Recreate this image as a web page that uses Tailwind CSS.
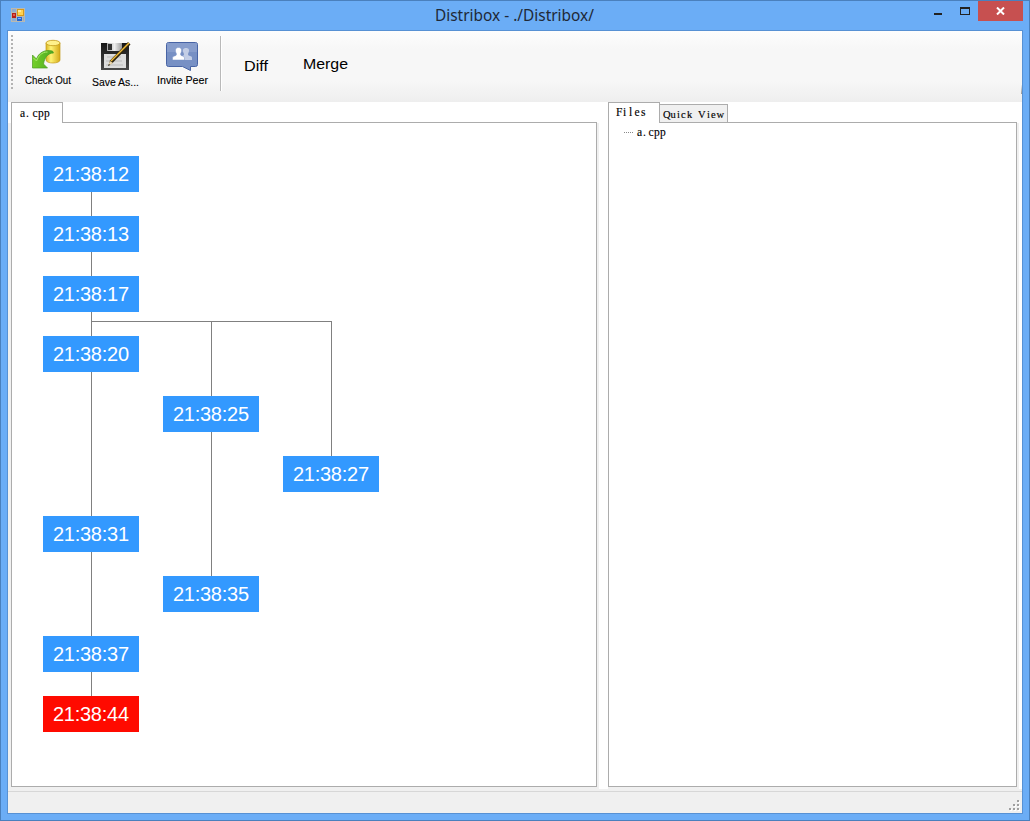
<!DOCTYPE html>
<html lang="en">
<head>
<meta charset="utf-8">
<title>Distribox</title>
<script src="https://cdn.jsdelivr.net/npm/@tailwindcss/browser@4"></script>
</head>
<body class="h-[821px] w-[1030px] overflow-hidden font-['Liberation_Sans',sans-serif] text-black">
<div class="flex h-[821px] w-[1030px] flex-col border border-[#4a80bd] bg-[#6badf6] px-1.5 pb-1.5">
  <header class="grid h-[29px] shrink-0 grid-cols-[1fr_auto_1fr]">
    <div class="pt-[7px] pl-1">
      <svg width="14" height="14" viewBox="0 0 14 14" shape-rendering="crispEdges">
        <path d="M0 0h14v14H0z" fill="#b9b9b2"/>
        <path d="M1 1h4v3H1zM1 10h4v3H1z" fill="#8facd0"/>
        <path d="M1 5h4v5H1z" fill="#b51e18"/><path d="M2 6h2v2H2z" fill="#e05b4b"/>
        <path d="M6 1h7v7H6z" fill="#d99a16"/><path d="M7 2h5v5H7z" fill="#ffd252"/><path d="M7 2h3v2H7z" fill="#ffe99b"/>
        <path d="M6 9h5v4H6z" fill="#2467d5"/><path d="M7 10h3v1H7z" fill="#7fb0ff"/>
        <path d="M12 9h1v4h-1z" fill="#8facd0"/>
      </svg>
    </div>
    <h1 class="pt-[4px]"><svg class="block" width="160" height="22"><text x="0" y="16" font-family="Noto Sans, Open Sans, sans-serif" font-size="15.500" textLength="159" lengthAdjust="spacingAndGlyphs" fill="#1f2937">Distribox - ./Distribox/</text></svg></h1>
    <div class="flex justify-end">
      <svg width="44" height="20" shape-rendering="crispEdges"><path d="M0 12h8v2H0z" fill="#222"/><path d="M26 6h10v8H26zM27 8v5h8V8z" fill-rule="evenodd" fill="#222"/></svg>
      <div class="flex h-5 w-[45px] justify-center bg-[#c75050] pt-[6px]"><svg width="9" height="8"><path d="M1 .5l7 7M8 .5l-7 7" stroke="#fff" stroke-width="2"/></svg></div>
    </div>
  </header>
  <main class="flex min-h-0 flex-1 flex-col border border-[#5791d4] bg-[#f0f0f0]">
    <nav class="flex h-[71px] shrink-0 bg-[linear-gradient(#fdfdfd,#f7f7f7_25%,#f7f7f7_70%,#eee)]">
      <div class="ml-[3px] mt-1 h-[55px] w-[3px]"><svg width="2" height="55" shape-rendering="crispEdges"><path d="M1 0v55" stroke="#b3b3b3" stroke-width="2" stroke-dasharray="2 2"/></svg></div>
      <button class="ml-1 flex w-[60px] flex-col items-center pt-[8px]">
        <svg class="-ml-1" width="30" height="32" viewBox="0 0 30 32">
          <defs><linearGradient id="y"><stop stop-color="#d9b523"/><stop offset=".35" stop-color="#fff374"/><stop offset="1" stop-color="#d5a918"/></linearGradient><linearGradient id="g" x2="1"><stop stop-color="#74d02a"/><stop offset="1" stop-color="#4ea822"/></linearGradient></defs>
          <path d="M15 4v17c0 4 14 4 14 0V4z" fill="url(#y)" stroke="#c39b1a" stroke-width=".7"/><ellipse cx="22" cy="4" rx="7" ry="2.700" fill="#fff18b" stroke="#c39b1a" stroke-width=".8"/>
          <path d="M1.500 16l4 4c2-6 8-10 16-8l1 2c-6 0-9 5-10 11l4 4H1.500z" fill="url(#g)" stroke="#4a9b20" stroke-width=".7"/><path d="M2.500 19l3 3c2-5 5-9 11-9" fill="none" stroke="#a9e96a"/>
        </svg>
        <svg class="block" width="52" height="16"><text x="3" y="13" font-size="10.500" textLength="46" lengthAdjust="spacingAndGlyphs" stroke="#000" stroke-width=".12">Check Out</text></svg>
      </button>
      <button class="ml-2 flex w-[60px] flex-col items-center pt-[8px]">
        <svg class="-ml-[3px]" width="32" height="34" viewBox="0 0 32 34">
          <defs><linearGradient id="k" x2="0" y2="1"><stop stop-color="#161616"/><stop offset="1" stop-color="#4a4a4a"/></linearGradient><linearGradient id="w"><stop stop-color="#aaa"/><stop offset=".5" stop-color="#eee"/><stop offset="1" stop-color="#999"/></linearGradient></defs>
          <path d="M2 4h27l1 1v26H2z" fill="url(#k)"/><path d="M8 4h15v8H8z" fill="url(#w)"/><path d="M9 5h4v6H9z" fill="#303030"/><path d="M5 15h22v14H5z" fill="#ddd"/><path d="M8 18h14M7 22h16M7 26h17" stroke="#bbb"/>
          <path d="M9.500 26.500l1.500-5L29 3l2.500 2.500-18 18.500z" fill="#302711"/><path d="M12 22L30 4" stroke="#f1bb36" stroke-width="1.500"/><path d="M9 27l2-5 3 2z" fill="#ecd8ad"/><path d="M9 27l1-2 1 1z"/>
        </svg>
        <svg class="block" width="50" height="14"><text x="1" y="13" font-size="10.500" textLength="47" lengthAdjust="spacingAndGlyphs" stroke="#000" stroke-width=".12">Save As...</text></svg>
      </button>
      <button class="ml-2 flex w-[60px] flex-col items-center pt-[10px]">
        <svg class="-ml-[5px]" width="34" height="31" viewBox="0 0 34 31">
          <path d="M3.500 1.500h27q2 0 2 2v20q0 2-2 2h-5v4l-8-4h-14q-2 0-2-2v-20q0-2 2-2z" fill="#7790c4" stroke="#4864a5"/>
          <path d="M2 3q0-1 1-1h28q1 0 1 1v8H2z" fill="#879dcc"/>
          <path d="M15 19v-2c0-3 4-1 4-4-2-4-1-6 2-6s4 2 2 6c0 3 4 1 4 4v2z" fill="#c3cee6"/>
          <path d="M7.500 19v-2c0-3 4-1 4-4-2-4-1-6.500 2-6.500s4 2.500 2 6.500c0 3 4 1 4 4v2z" stroke="#7790c4" stroke-width=".5" fill="#fff"/>
        </svg>
        <svg class="block" width="54" height="14"><text x="0" y="12" font-size="10.500" textLength="51" lengthAdjust="spacingAndGlyphs" stroke="#000" stroke-width=".12">Invite Peer</text></svg>
      </button>
      <div class="ml-[6px] mt-[5px] h-[55px] w-[2px] border-l border-[#b9b9b9] bg-white"></div>
      <button class="ml-[22px] flex items-start pt-[26px]"><svg width="25" height="20"><text x="0" y="14" font-size="15.500" textLength="24" lengthAdjust="spacingAndGlyphs">Diff</text></svg></button>
      <button class="ml-[34px] flex items-start pt-[24px]"><svg width="48" height="20"><text x="0" y="14" font-size="15.500" textLength="45" lengthAdjust="spacingAndGlyphs">Merge</text></svg></button>
      <div class="mt-[54px] ml-auto h-[9px] w-px bg-linear-to-b from-[#eee] to-[#999]"></div>
    </nav>
    <div class="flex h-[687px] shrink-0 bg-white">
      <section class="flex w-[591px] flex-col bg-[#f0f0f0] font-['Liberation_Serif',serif] text-xs">
        <div class="flex h-[21px] shrink-0 bg-white pl-[3px]"><div class="relative z-10 -mb-px h-[21px] w-[52px] border border-b-0 border-[#acacac] bg-white"><svg class="block" width="48" height="20"><text x="8 14 20.500 26 32" y="14" stroke="#000" stroke-width=".15" font-size="11.500">a.cpp</text></svg></div></div>
        <div class="-mt-px mb-[2px] ml-[3px] mr-[2px] min-h-0 flex-1 border border-[#acacac] bg-white">
          <svg class="block" width="400" height="640" font-family="Liberation Sans, sans-serif" font-size="20">
            <path d="M79.500 40V590M79.500 198.500H319.500M199.500 198V460M319.500 198V340" fill="none" stroke="#808080" shape-rendering="crispEdges"/>
            <g fill="#3399ff"><path d="M31 33h96v36H31zM31 93h96v36H31zM31 153h96v36H31zM31 213h96v36H31zM151 273h96v36h-96zM271 333h96v36h-96zM31 393h96v36H31zM151 453h96v36h-96zM31 513h96v36H31z"/><path fill="#ff0a00" d="M31 573h96v36H31z"/></g>
            <g fill="#fff"><text x="41" y="58" textLength="76">21:38:12</text><text x="41" y="118" textLength="76">21:38:13</text><text x="41" y="178" textLength="76">21:38:17</text><text x="41" y="238" textLength="76">21:38:20</text><text x="161" y="298" textLength="76">21:38:25</text><text x="281" y="358" textLength="76">21:38:27</text><text x="41" y="418" textLength="76">21:38:31</text><text x="161" y="478" textLength="76">21:38:35</text><text x="41" y="538" textLength="76">21:38:37</text><text x="41" y="598" textLength="76">21:38:44</text></g>
          </svg>
        </div>
      </section>
      <section class="ml-[9px] flex w-[411px] flex-col bg-[#f0f0f0] font-['Liberation_Serif',serif] text-xs">
        <div class="flex h-[21px] shrink-0 items-start bg-white">
          <div class="relative z-10 h-[21px] w-[52px] border border-b-0 border-[#acacac] bg-white"><svg class="block" width="50" height="20"><text x="7 14 20 25.500 32" y="13" stroke="#000" stroke-width=".15" font-size="11.500">Files</text></svg></div>
          <div class="-ml-px mt-[2px] h-[19px] w-[69px] border border-b-0 border-[#acacac] bg-[#f0f0f0]"><svg class="block" width="67" height="17"><text x="3 10.500 17 21 27 33 38 47 51 56.500" y="13" font-size="10.500" stroke="#000" stroke-width=".15">Quick View</text></svg></div>
        </div>
        <div class="-mt-px mb-[2px] mr-[2px] min-h-0 flex-1 border border-[#acacac] bg-white">
          <svg class="block" width="70" height="20"><path d="M15 9.500h9" stroke="#888" stroke-dasharray="1 1" shape-rendering="crispEdges"/><text x="28 34 39.500 45 51" y="13" stroke="#000" stroke-width=".15" font-size="11.500">a.cpp</text></svg>
        </div>
      </section>
    </div>
    <footer class="mt-[2px] flex flex-1 items-end justify-end border-t border-[#d7d7d7] bg-[#f0f0f0] pr-[2px] pb-[2px]">
      <svg width="12" height="12" fill="#a0a0a0" shape-rendering="crispEdges"><path fill="#fff" d="M10 2h2v2h-2zM6 6h2v2H6zM10 6h2v2h-2zM2 10h2v2H2zM6 10h2v2H6zM10 10h2v2h-2z"/><path d="M9 1h2v2H9zM5 5h2v2H5zM9 5h2v2H9zM1 9h2v2H1zM5 9h2v2H5zM9 9h2v2H9z"/></svg>
    </footer>
  </main>
</div>
</body>
</html>
